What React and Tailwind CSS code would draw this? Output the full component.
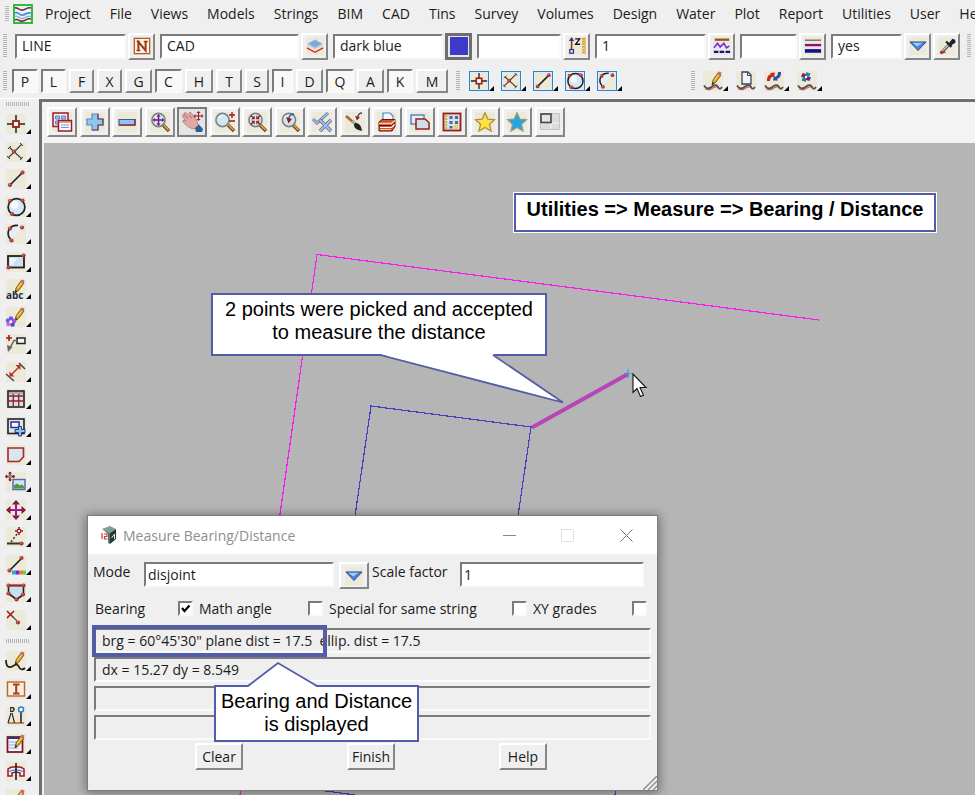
import React from "react";
import clsx from "clsx";

const MAROON = "#9b1c22";
const SUNKEN =
  "border-2 border-t-[#7b7b7b] border-l-[#7b7b7b] border-r-[#fafafa] border-b-[#fafafa]";
const RAISED =
  "border-2 border-t-white border-l-white border-r-[#868686] border-b-[#868686] bg-[#efefef]";

/* ---------- icon drawings, all on a 20 x 20 grid ---------- */

const Dot = ({ x, y }) => (
  <g>
    <circle cx={x} cy={y} r="2.1" fill="#a8363c" stroke="none" />
    <circle cx={x - 0.5} cy={y - 0.6} r="0.7" fill="#d99" stroke="none" />
  </g>
);

const Pencil = () => (
  <g>
    <path d="M9 14l1-5 5-7 3 2-5 7z" fill="#e0a21c" stroke="#6b4a10" strokeWidth=".8" />
    <path d="M14 2.500l1.500-2 3 1-1 3z" fill="#c86a78" />
    <path d="M9 14l.6-3 1.800 1.300z" fill="#222" />
    <path d="M11.500 9.500l4-5.500" stroke="#ffe08a" />
  </g>
);

const Lens = ({ cx = 8.5, cy = 8 }) => (
  <g>
    <path d="M13 13l6 6" stroke="#7b4a1a" strokeWidth="3.400" />
    <path d="M13.500 13l5 5" stroke="#e8a04a" strokeWidth="1.500" />
    <circle cx={cx} cy={cy} r="6.600" fill="#d3e6ee" stroke="#76858c" strokeWidth="1.600" />
    <path d="M4.500 6a5 5 0 0 1 4-3" stroke="#fff" strokeWidth="1.200" fill="none" />
  </g>
);

const Wave = () => (
  <path d="M1 14.500c2 3.500 5 3.500 7.500 1.500s5-3 6.500 0 3 1.500 4 0" fill="none" stroke="#4a4f55" strokeWidth="1.700" />
);
const RedWave = () => (
  <path d="M2 17.500c3 2 5 1.500 8-.5s5-1 6 .5" fill="none" stroke="#c23a3a" strokeWidth="1" />
);

const Cross4 = ({ c = "#8a1a6e" }) => (
  <g fill={c}>
    <path d="M9 4h2v12H9zM4 9h12v2H4z" />
    <path d="M10 0l4 4.500H6zM10 20l4-4.500H6zM0 10l4.500-4v8zM20 10l-4.500-4v8z" />
  </g>
);

const StarShape = ({ fill, stroke }) => (
  <path d="M10 .8l2.800 6.300 6.700.6-5 4.500 1.500 6.800-6-3.600L4 19l1.500-6.800-5-4.500 6.700-.6z" fill={fill} stroke={stroke} strokeWidth="1.200" />
);

const ICONS = {
  point: (
    <g fill="none">
      <path d="M10 1v6M10 13v6M1 10h6M13 10h6" stroke="#222" strokeWidth="1.500" />
      <rect x="7" y="7" width="6" height="6" fill="#fff" stroke={MAROON} strokeWidth="1.800" />
    </g>
  ),
  cross: (
    <g fill="none" stroke="#444" strokeWidth="1.300">
      <path d="M3 5l13 12M16 2L2 16" />
      <path d="M2 7l3-3M14 1l3 3M1 14l3 3M14 18l3-3" strokeWidth="1" />
      <Dot x={8} y={9.5} />
    </g>
  ),
  line: (
    <g>
      <path d="M4 16L16 4" stroke="#222" strokeWidth="1.700" />
      <Dot x={4} y={16} />
      <Dot x={16.5} y={3.5} />
    </g>
  ),
  circle: (
    <g>
      <circle cx="10.500" cy="10" r="8.400" fill="#d7e6f5" stroke="#222" strokeWidth="1.700" />
      <circle cx="8.500" cy="8" r="4" fill="#f3f8fd" />
      <Dot x={4} y={4} />
      <Dot x={16.5} y={3.5} />
      <Dot x={6} y={17} />
    </g>
  ),
  arc: (
    <g>
      <path d="M5 16C-1 9 3 1 12 1.500l4 2z" fill="#e6eff8" />
      <path d="M5 16C-1 9 3 1 12 1.500" fill="none" stroke="#222" strokeWidth="1.700" />
      <Dot x={4} y={4.5} />
      <Dot x={16} y={3.5} />
      <Dot x={5.5} y={16.5} />
    </g>
  ),
  rect: (
    <g>
      <rect x="2" y="4" width="16" height="11.500" fill="#cfe0ea" stroke="#222" strokeWidth="1.800" />
      <path d="M4 6h8l-6 7H4z" fill="#eef6fa" />
      <Dot x={17.5} y={3.5} />
      <Dot x={2.5} y={15.5} />
    </g>
  ),
  text: (
    <g>
      <Pencil />
      <text x="0" y="20" fontSize="10" fontWeight="700" fill="#1c3346" fontFamily="Open Sans, sans-serif">abc</text>
    </g>
  ),
  paint: (
    <g>
      <Pencil />
      <circle cx="5" cy="11.500" r="2.300" fill="#6a5be0" />
      <circle cx="8" cy="14" r="2.300" fill="#b04bd8" />
      <circle cx="6.500" cy="17.500" r="2.300" fill="#3c54c8" />
      <circle cx="2.500" cy="17" r="2.300" fill="#d46ad0" />
      <circle cx="2" cy="13.500" r="2.300" fill="#5a6ae8" />
      <circle cx="4.800" cy="14.800" r="1.500" fill="#fff" />
    </g>
  ),
  leader: (
    <g fill="none">
      <path d="M3 1v6M0 4h6" stroke={MAROON} strokeWidth="1.600" />
      <rect x="11" y="4" width="8" height="5.500" fill="#eef6fa" stroke="#222" strokeWidth="1.500" />
      <path d="M11 6.500H8L4 14" stroke="#666" strokeWidth="1.500" />
      <path d="M1 11l5.500 2L2 18z" fill="#666" />
    </g>
  ),
  dimension: (
    <g fill="none">
      <path d="M13 1l6 6M0 12l8 7" stroke="#444" strokeWidth="1.500" />
      <path d="M5 13l8-8" stroke="#c22a22" strokeWidth="1.500" />
      <path d="M14.500 3v5l-5-5zM3.500 9.500v5h5z" fill="#c22a22" />
    </g>
  ),
  table: (
    <g>
      <rect x="2" y="2" width="16" height="16" fill="#cfe0ea" stroke="#222" strokeWidth="1.600" />
      <path d="M3 4h14" stroke="#aaa" strokeWidth="2" />
      <path d="M2 7h16M2 12h16M7.300 5v12M12.700 5v12" stroke={MAROON} strokeWidth="1.300" />
    </g>
  ),
  zoomin: (
    <g>
      <rect x="2" y="2" width="16" height="14.500" fill="#dce8ee" stroke="#222" strokeWidth="1.600" />
      <rect x="5" y="5" width="8" height="5.500" fill="#f6fafc" stroke="#2a2aa8" strokeWidth="1.500" />
      <path d="M12.500 9.500h3v3h3.500v3h-3.500V19h-3v-3.500H9v-3h3.500z" fill="#8fc6e8" stroke="#1f3a8a" />
    </g>
  ),
  polygon: (
    <path d="M2 3h15.500v9l-4.500 4.500H2z" fill="#d9e6ee" stroke="#a52a2a" strokeWidth="1.600" />
  ),
  image: (
    <g>
      <path d="M4 0v9M-.5 4.500h9" stroke={MAROON} strokeWidth="1.800" />
      <path d="M4-.5l2 2H2zM4 9.500l2-2H2zM-1 4.500l2-2v4zM9 4.500l-2-2v4z" fill={MAROON} />
      <circle cx="4" cy="4.500" r="1.700" fill="#5aa" />
      <rect x="7" y="7.500" width="12" height="10" fill="#cfe2fa" stroke="#5566aa" strokeWidth="1.400" />
      <path d="M8 16.500v-3l3-2 3 2 2-1 2 2v2z" fill="#4c9a35" />
    </g>
  ),
  move: (
    <g>
      <Cross4 c="#7a1230" />
      <path d="M9.200 3h1.600v14H9.200zM3 9.200h14v1.600H3z" fill="#b01ab0" />
    </g>
  ),
  vertex: (
    <g>
      <path d="M5 15L11 7" stroke="#333" strokeWidth="1.500" strokeDasharray="2 2" />
      <path d="M1 16.500h14" stroke="#333" strokeWidth="2" />
      <path d="M13 0v8M9 4h8" stroke={MAROON} strokeWidth="1.600" />
      <rect x="11.500" y="2.500" width="3" height="3" fill="#fff" stroke={MAROON} />
      <Dot x={15.5} y={16.5} />
    </g>
  ),
  colour: (
    <g>
      <path d="M4 15L15 4" stroke="#222" strokeWidth="1.700" />
      <Dot x={3.5} y={15.5} />
      <Dot x={15.5} y={3} />
      <path d="M6 15.500h3.500v4H6z" fill="#19b0f0" />
      <path d="M9.500 15.500H13v4H9.500z" fill="#6a2ae0" />
      <path d="M13 15.500h4v4h-4z" fill="#f07a40" />
      <path d="M17 15.500h3v4h-3z" fill="#4be03a" />
    </g>
  ),
  shape: (
    <g>
      <path d="M2.500 3.500h15v9l-7 5-8-6z" fill="#c9dfec" stroke="#222" strokeWidth="1.600" />
      <path d="M2 3.500h16" stroke={MAROON} strokeWidth="1.800" />
      <Dot x={2.5} y={3.5} />
      <Dot x={17.5} y={3.5} />
      <Dot x={2.5} y={11.5} />
      <Dot x={17} y={12.5} />
      <Dot x={10.5} y={17.5} />
    </g>
  ),
  erase: (
    <g>
      <path d="M1 1l7 7M8 1L1 8" stroke={MAROON} strokeWidth="1.600" />
      <path d="M8 8l3 3" stroke="#555" strokeWidth="1.200" />
      <Dot x={12} y={12.5} />
    </g>
  ),
  sketch: (
    <g>
      <Pencil />
      <path d="M0 9c0 8 4 8 7 6s5-2 6 1 4 3 6 1" fill="none" stroke="#222" strokeWidth="1.800" />
    </g>
  ),
  ibox: (
    <g>
      <rect x="1.500" y="3" width="17" height="14" fill="#fbeee2" stroke="#c0642e" strokeWidth="1.400" />
      <path d="M7 5.500h6.500M7 14.500h6.500M10.200 5.500v9" stroke="#a0431a" strokeWidth="2" />
    </g>
  ),
  survey: (
    <g fill="none">
      <path d="M2 17h16" stroke="#c0642e" strokeWidth="1.500" />
      <path d="M5 7l-3 10M6 7l2.500 10" stroke="#222" strokeWidth="1.100" />
      <path d="M4 1h3.500l1.500 2-1.500 3H4z" fill="#333" />
      <circle cx="6" cy="3.500" r="1.200" fill="#ddd" />
      <path d="M15 6v11" stroke="#222" strokeWidth="1.500" />
      <circle cx="15" cy="3.500" r="2.500" fill="#fff" stroke="#2a80c8" strokeWidth="1.500" />
    </g>
  ),
  form: (
    <g>
      <rect x="1.500" y="3" width="15" height="15" fill="#f2f6fc" stroke="#7a1222" strokeWidth="1.700" />
      <path d="M2 4h14" stroke="#223a7a" strokeWidth="2" />
      <path d="M3 8h9M3 11h8M3 14h9" stroke="#8aa4dc" />
      <Pencil />
    </g>
  ),
  section: (
    <g fill="none">
      <path d="M2 8c3-3 13-3 16 0v7h-4v-3c-2-1-6-1-8 0v3H2z" fill="#e8eef6" stroke={MAROON} strokeWidth="1.500" />
      <path d="M3 10.500c4-2 10-2 14 0" stroke="#3a5ac0" strokeWidth="1" />
      <path d="M10 2v17" stroke="#111" strokeWidth="1.500" />
    </g>
  ),
  pencilWave: (
    <g>
      <Wave />
      <RedWave />
      <Pencil />
    </g>
  ),
  pageWave: (
    <g>
      <path d="M6 1h6l3 3v9H6z" fill="#eef4fa" stroke="#3c4650" strokeWidth="1.300" />
      <path d="M11.500 1v3.500H15" fill="none" stroke="#3c4650" />
      <Wave />
      <RedWave />
    </g>
  ),
  swapWave: (
    <g>
      <Wave />
      <RedWave />
      <path d="M3 10c0-4 1-6 4-7l-1-1 5-.5-1 5-1-1c-2 1-3 2-3 4.500z" fill="#c22a22" />
      <path d="M17 1c0 4-1 6-4 7l1 1.500-5 0 1-5 1 1.500c2-1 3-2 3-5z" fill="#2a4f9a" />
    </g>
  ),
  pinWave: (
    <g>
      <Wave />
      <RedWave />
      <path d="M9 6L4 6l1.500-4L9 3z" fill="#8a1a8a" />
      <path d="M9 6V1l4.500 1.500L12 6z" fill="#1a9a7a" />
      <path d="M9 6h5l-1.500 4L9 9z" fill="#7a1a9a" />
      <path d="M9 6v5l-4.500-1.500L6 6z" fill="#1a8a6a" />
      <circle cx="9" cy="6" r="1.200" fill="#fff" />
    </g>
  ),
  windows: (
    <g>
      <rect x="1" y="1" width="15" height="13.500" fill="#e7eef8" stroke={MAROON} strokeWidth="1.500" />
      <path d="M3.500 4h4v3h-4zM9.500 4h4v3h-4zM3.500 9h3v3h-3z" fill="#9ec4ee" stroke="#4a6cb0" strokeWidth=".8" />
      <rect x="6.500" y="8.500" width="13" height="10.500" fill="#fff" stroke={MAROON} strokeWidth="1.500" />
      <path d="M7.500 10h11" stroke="#c33" strokeWidth="1" />
      <path d="M9 13h8M9 15.500h8" stroke="#6c94d8" />
    </g>
  ),
  plus: (
    <g>
      <path d="M7 2h6v5h5v6h-5v5H7v-5H2V7h5z" fill="#8fc6ee" stroke="#5a8ac0" strokeWidth="1.200" />
      <path d="M13 2v5h5v6h-5v5H7" fill="none" stroke="#7a3a56" strokeWidth="1.200" />
    </g>
  ),
  minus: (
    <g>
      <path d="M2 7.500h16v5.500H2z" fill="#8fc6ee" stroke="#4a5a86" strokeWidth="1.200" />
      <path d="M2 13.200h16V7" fill="none" stroke={MAROON} strokeWidth="1.200" />
    </g>
  ),
  zoomall: (
    <g>
      <Lens />
      <path d="M8.500 3v10M3.500 8h10" stroke="#7a1a7a" strokeWidth="1.500" />
      <path d="M8.500 2l2 2.500h-4zM8.500 14l2-2.500h-4zM2.500 8L5 6v4zM14.500 8L12 6v4z" fill="#7a1a7a" />
    </g>
  ),
  pan: (
    <g>
      <path d="M0 3.500c1-1.500 2-.5 3 .5l3 3-4-5c0-1.500 1.500-2 2.500-.8l5 5L7 1.500C7 0 8.500 0 9.500 1.200l5 7 2 5-3 3.500c-4 .5-6-1-9-3.500L1 10c-1-1.500 1-2.500 2-1.500l1 .8z" fill="#e2a8a4" stroke="#a86a68" strokeWidth=".7" />
      <path d="M13 16l4-3.500 4 4.500-1 3h-6z" fill="#2a5f9a" />
      <path d="M16.500 0v8M12.500 4h8" stroke={MAROON} strokeWidth="1.200" />
      <path d="M16.500-1l2 2h-4zM16.500 9l2-2h-4zM11.500 4l2-2v4zM21.500 4l-2-2v4z" fill={MAROON} />
    </g>
  ),
  zoompm: (
    <g>
      <Lens cx={7.5} />
      <path d="M17 0v6M14 3h6M14 9h6" stroke={MAROON} strokeWidth="1.400" />
    </g>
  ),
  zoomfit: (
    <g>
      <Lens />
      <path d="M4 3.500l3 3M13 3.500l-3 3M4 12.500l3-3M13 12.500l-3-3" stroke={MAROON} strokeWidth="1.400" />
      <path d="M7.700 3.500v3.700H4zM9.300 3.500v3.700H13zM7.700 12.500V8.800H4zM9.300 12.500V8.800H13z" fill={MAROON} />
    </g>
  ),
  zoomback: (
    <g>
      <Lens cx={9} />
      <path d="M14 2c-4 0-5 2-5.500 6" fill="none" stroke="#2a5080" strokeWidth="1.500" />
      <path d="M6 5l6 2-3.500 4.500z" fill={MAROON} />
    </g>
  ),
  ticks: (
    <g fill="none">
      <path d="M1 7l4 4L16 1" stroke="#5c6c9a" strokeWidth="3" />
      <path d="M1 7l4 4L16 1" stroke="#9cc8ec" strokeWidth="1.600" />
      <path d="M8 8l11 11M19 8L8 19" stroke="#7a4a6a" strokeWidth="3.200" />
      <path d="M8 8l11 11M19 8L8 19" stroke="#8fc6ee" strokeWidth="2.200" />
    </g>
  ),
  brush: (
    <g>
      <path d="M1 4l7 6" stroke="#a06a40" strokeWidth="2.600" />
      <path d="M7 9l4 3.500" stroke="#aaa" strokeWidth="3.500" />
      <path d="M10 11c4 0 6 2 7 8-5-1-8-3-8-6z" fill="#222" />
      <path d="M17 1c-3 0-4 2-4.500 5" fill="none" stroke="#3a4a7a" strokeWidth="1.300" />
      <path d="M10 4l5 1-3 3.500z" fill={MAROON} />
    </g>
  ),
  printer: (
    <g>
      <path d="M6 1h7l3 3v6H6z" fill="#eef6ff" stroke="#5a86c8" strokeWidth="1.200" />
      <path d="M2 10l3-2.500h13v7L15 19H2z" fill="#d84a40" stroke="#6c1418" />
      <path d="M2 11.500h12.500l3.500-3" fill="none" stroke="#f4dc70" strokeWidth="1.500" />
      <path d="M2 13.500h12.500l3.500-3" fill="none" stroke="#5c1014" />
      <path d="M3 15.500h11.500l3-3" fill="none" stroke="#fff" strokeWidth="1.200" />
      <path d="M3 17.500h11" fill="none" stroke="#f4dc70" />
    </g>
  ),
  cascade: (
    <g>
      <path d="M1 3h13v9H1z" fill="#e4eef6" stroke="#5a86c0" strokeWidth="1.500" />
      <path d="M6 7h9l4 3.500V17H6z" fill="#cfdfe8" stroke={MAROON} strokeWidth="1.500" />
    </g>
  ),
  building: (
    <g>
      <rect x="1.500" y="1.500" width="17" height="17" fill="#d8e2ea" stroke={MAROON} strokeWidth="1.800" />
      <path d="M4 3v14" stroke="#d8b83a" strokeWidth="2.500" strokeDasharray="2 1" />
      <path d="M7.500 4h3v3h-3zM13 4h3v3h-3zM7.500 9h3v3h-3zM13 9h3v3h-3zM7.500 14h3v2.500h-3z" fill="#4a6a9a" />
      <path d="M12 13h4v4h-4z" fill="#f0d050" />
    </g>
  ),
  starY: <StarShape fill="#ffe04a" stroke="#b08a3a" />,
  starB: <StarShape fill="#1fa8e4" stroke="#9a9a80" />,
  panes: (
    <g>
      <path d="M0 1h20v17H0z" fill="#dcdcdc" />
      <path d="M11 1v17M0 11h20" stroke="#f4f4f4" />
      <path d="M.5 1.500h19v16H.5z" fill="none" stroke="#c4c4c4" />
      <rect x="1" y="2" width="10" height="8.500" fill="#e4e4e4" stroke="#444" strokeWidth="1.600" />
    </g>
  ),
  name: (
    <g>
      <rect x="1.500" y="1.500" width="17" height="17" fill="#fdf1e6" stroke="#b05a2a" strokeWidth="1.400" />
      <path d="M6 15V5.500L14 15V5" fill="none" stroke="#963c10" strokeWidth="2.200" />
      <path d="M4 5h3.500M12 5h4.500M4 15h4" stroke="#963c10" strokeWidth="1.400" />
    </g>
  ),
  layers: (
    <g>
      <path d="M1 12l9 5 9-5" fill="none" stroke="#d22" strokeWidth="1.500" />
      <path d="M1 9l9 5 9-5-9-5z" fill="#c8d0da" />
      <path d="M2 7.500l8 4.500 8-4.500L10 3z" fill="#7fa8d8" stroke="#a8c4e4" />
    </g>
  ),
  swatch: <path d="M0 0h20v20H0z" fill="#3d39c9" />,
  zscale: (
    <g>
      <path d="M4 3v12" stroke={MAROON} strokeWidth="1.600" />
      <path d="M4 0l3 4.500H1z" fill="#27408a" />
      <rect x="2" y="14" width="4" height="4" fill="#fff" stroke="#27409a" strokeWidth="1.500" />
      <path d="M8 2h5L8.500 8H13.500" fill="none" stroke="#111" strokeWidth="1.500" />
      <path d="M17.500 1v18" stroke="#d89a1c" strokeWidth="3.500" strokeDasharray="2 1" />
      <path d="M19 0v20" stroke="#e6b84a" />
    </g>
  ),
  terrain: (
    <g fill="none">
      <path d="M2 3h16" stroke="#9a5210" strokeWidth="2.500" />
      <path d="M1 12l4-5 3 4 4-4 3 5 3-2" stroke="#7a2ae8" strokeWidth="1.800" />
      <path d="M1 16.500h18" stroke="#101090" strokeWidth="2.500" strokeDasharray="5 1.500" />
    </g>
  ),
  weight: (
    <g>
      <path d="M1 3.500h18" stroke="#333" />
      <path d="M1 9h18" stroke="#8a108a" strokeWidth="2.600" />
      <path d="M1 15.500h18" stroke="#101090" strokeWidth="4" />
    </g>
  ),
  down: (
    <g>
      <path d="M1 5.500h18L10 15z" fill="#3f86e8" stroke="#2c3f78" strokeWidth="1" />
      <path d="M4 6.500h11l-6 4z" fill="#a8ccfa" />
    </g>
  ),
  dropper: (
    <g>
      <path d="M3 18l9-9" stroke="#444" strokeWidth="3.200" />
      <path d="M4.500 16l7-7" stroke="#dbe6f0" strokeWidth="1.300" />
      <path d="M2 18l4-3 3 2-5 2z" fill="#c22a22" />
      <path d="M9 5l6 6" stroke="#222" strokeWidth="2.500" />
      <path d="M12 7l4-5 3 1 .5 3-5 3.500z" fill="#1c2040" />
    </g>
  ),
};

const Icon = ({ name, className }) => (
  <svg viewBox="0 0 20 20" aria-hidden="true" className={clsx("shrink-0 overflow-visible", className)}>
    {ICONS[name]}
  </svg>
);

/* ---------- small parts ---------- */

const GripV = ({ className }) => (
  <span className={clsx("w-[4px] shrink-0 bg-[repeating-linear-gradient(to_bottom,#b4b4b4_0_1px,#f0f0f0_1px_2px)]", className)} />
);
const GripH = () => (
  <span className="h-[4px] w-6 shrink-0 bg-[repeating-linear-gradient(to_right,#b4b4b4_0_1px,#f0f0f0_1px_2px)]" />
);

/* Flat tool with an optional fly-out corner */
function Tool({ name, boxed, flyout = true }) {
  return (
    <button type="button" aria-label={name} className="flex shrink-0 items-end">
      <span className={clsx("bg-[#ece9d8]", boxed && "border border-[#1f86e8]")}>
        <Icon name={name} className={boxed ? "size-[18px]" : "size-5"} />
      </span>
      {flyout && (
        <svg viewBox="0 0 5 5" className="size-[5px]" aria-hidden="true">
          <path d="M5 0v5H0z" fill="#000" />
        </svg>
      )}
    </button>
  );
}

function Field({ label, value, pick, width }) {
  return (
    <div className="flex shrink-0 items-center gap-0.5">
      <input
        aria-label={label}
        defaultValue={value}
        className={clsx("h-[25px] bg-white pb-px pl-[5px] outline-none", SUNKEN, width)}
      />
      <BarButton name={pick} />
    </div>
  );
}

const BarButton = ({ name }) => (
  <button
    type="button"
    aria-label={name}
    className={clsx(
      "flex h-[27px] w-[27px] shrink-0 items-center justify-center",
      name === "swatch" ? "border-[3px] border-[#6e6e6e] bg-[#e8e8e8]" : RAISED
    )}
  >
    <span className="flex bg-[#ece9d8]">
      <Icon name={name} className="size-[18px]" />
    </span>
  </button>
);

/* ---------- data ---------- */

const MENUS = [
  "Project", "File", "Views", "Models", "Strings", "BIM", "CAD", "Tins", "Survey",
  "Volumes", "Design", "Water", "Plot", "Report", "Utilities", "User", "Help",
];

const SNAPS = [
  ["P", true, "w-[26px]"], ["L", true, "w-[25px]"], ["F", false, "w-[25px]"],
  ["X", false, "w-[25px]"], ["G", false, "w-[27px]"], ["C", true, "w-[27px]"],
  ["H", false, "w-[28px]"], ["T", false, "w-[26px]"], ["S", false, "w-[24px]"],
  ["I", true, "w-[21px]"], ["D", false, "w-[27px]"], ["Q", true, "w-[28px]"],
  ["A", false, "w-[27px]"], ["K", true, "w-[26px]"], ["M", false, "w-[32px]"],
];

const SIDE_A = [
  "point", "cross", "line", "circle", "arc", "rect", "text", "paint", "leader", "dimension",
  "table", "zoomin", "polygon", "image", "move", "vertex", "colour", "shape", "erase",
];
const SIDE_B = ["sketch", "ibox", "survey", "form", "section", "sketch"];

const VIEW_TOOLS = [
  "windows", "plus", "minus", "zoomall", "pan", "zoompm", "zoomfit", "zoomback",
  "ticks", "brush", "printer", "cascade", "building", "starY", "starB", "panes",
];

/* ---------- regions ---------- */

function MenuBar() {
  return (
    <nav className="flex h-7 items-center pl-[5px]">
      <GripV className="h-4" />
      <svg viewBox="0 0 20 20" className="ml-1 size-5 shrink-0" aria-hidden="true">
        <rect x="1" y="1" width="18" height="18" fill="#e8f4fa" stroke="#1fb52c" strokeWidth="1.800" />
        <path d="M2 4c3-1 4 3 8 2s4-3 8-2" fill="none" stroke="#7a3030" strokeWidth="1.600" />
        <path d="M2 9c3-2 4 3 8 2s4-3 8-2" fill="none" stroke="#4a8ad8" strokeWidth="1.800" />
        <path d="M2 12.500c3-2 4 3 8 2s4-3 8-2" fill="none" stroke="#8ab4e4" strokeWidth="1.400" />
        <path d="M2 16c3-2 4 2 8 1s4-3 8-2" fill="none" stroke="#7a3030" strokeWidth="1.600" />
      </svg>
      <div className="ml-[3px] flex gap-px pb-0.5">
        {MENUS.map((m) => (
          <button key={m} type="button" className="shrink-0 px-[9px]">
            {m}
          </button>
        ))}
      </div>
    </nav>
  );
}

function PropertyBar() {
  return (
    <div className="flex h-9 items-center gap-[5px] pl-[3px]">
      <GripV className="mr-[3px] h-6" />
      <Field label="Name" value="LINE" pick="name" width="w-[111px]" />
      <Field label="Model" value="CAD" pick="layers" width="w-[139px]" />
      <Field label="Colour" value="dark blue" pick="swatch" width="w-[110px]" />
      <Field label="Height" value="" pick="zscale" width="w-[84px]" />
      <Field label="Line style" value="1" pick="terrain" width="w-[111px]" />
      <Field label="Weight" value="" pick="weight" width="w-[57px]" />
      <Field label="Tinable" value="yes" pick="down" width="w-[71px]" />
      <span className="-ml-[3px] flex">
        <BarButton name="dropper" />
      </span>
      <GripV className="ml-0.5 h-6" />
    </div>
  );
}

function SnapBar() {
  return (
    <div className="flex h-[34px] items-center pl-[3px]">
      <GripV className="h-5" />
      <div className="ml-[5px] flex gap-[3px]">
        {SNAPS.map(([k, on, w]) => (
          <button
            key={k}
            type="button"
            aria-pressed={on}
            className={clsx("flex h-6 shrink-0 items-center justify-center", w, on ? SUNKEN : RAISED, on && "bg-[#f8f8f8]")}
          >
            {k}
          </button>
        ))}
      </div>
      <GripV className="ml-2 h-5" />
      <div className="ml-[9px] flex gap-[7px]">
        {["point", "cross", "line", "circle", "arc"].map((n) => (
          <Tool key={n} name={n} boxed />
        ))}
      </div>
      <GripV className="ml-[69px] h-5" />
      <div className="ml-2 flex gap-2">
        <Tool name="pencilWave" />
        <Tool name="pageWave" flyout={false} />
        <Tool name="swapWave" />
        <Tool name="pinWave" />
      </div>
    </div>
  );
}

function SideBar() {
  return (
    <aside className="flex w-[39px] shrink-0 flex-col overflow-hidden pl-1.5 pt-[3px]">
      <GripH />
      <div className="mt-2 flex h-[516px] shrink-0 flex-col justify-between">
        {SIDE_A.map((n) => (
          <Tool key={n} name={n} />
        ))}
      </div>
      <div className="mb-2 mt-[9px] flex">
        <GripH />
      </div>
      <div className="flex h-[158px] shrink-0 flex-col justify-between">
        {SIDE_B.map((n, i) => (
          <Tool key={i} name={n} />
        ))}
      </div>
    </aside>
  );
}

function ViewBar() {
  return (
    <div className="h-[41px] shrink-0 bg-[#f3f3f3] pl-[5px] pt-[5px]">
      <div className="flex w-[518px] justify-between">
        {VIEW_TOOLS.map((n) => (
          <button
            key={n}
            type="button"
            aria-label={n}
            className={clsx(
              "flex size-[30px] items-center justify-center",
              n === "pan" ? "border-2 border-[#7b7b7b] bg-[#e4e4e4]" : RAISED
            )}
          >
            <span className={clsx("flex", n !== "panes" && n !== "pan" && "bg-[#ece9d8]")}>
              <Icon name={n} className="size-5" />
            </span>
          </button>
        ))}
      </div>
    </div>
  );
}

/* Plan-view line work */
function Drawing() {
  return (
    <svg viewBox="44 143 931 652" className="absolute left-0 top-0 h-[652px] w-[931px]" aria-hidden="true">
      <g fill="none" shapeRendering="crispEdges">
        <path d="M819 320L317 254.500L240 795" stroke="#f41cf0" strokeWidth="1.200" />
        <path d="M319 790l36 5M616 790l-1 5M355 516l16-110 160 21-13 89" stroke="#4340c4" strokeWidth="1.200" />
      </g>
      <path d="M532 427.500l96-53.500" stroke="#b844b8" strokeWidth="4" />
      <path d="M628 369v9M624 373.500h9" stroke="#3aa0d0" strokeWidth="1.200" />
    </svg>
  );
}

/* Mouse pointer resting on the second picked point */
function Pointer() {
  return (
    <svg viewBox="0 0 16 26" className="absolute left-[588px] top-[230px] h-[26px] w-4" aria-hidden="true">
      <path d="M1 1v18.500l4-4 3.500 8 3-1.300L8 14.500h6z" fill="#fff" stroke="#111" strokeWidth="1.100" />
    </svg>
  );
}

function PickCallout() {
  return (
    <div className="absolute left-[167px] top-[150px] w-[336px]">
      <div className="h-[63px] border-2 border-[#535ca6] bg-white pt-[3px] text-center font-['Liberation_Sans',Arial,sans-serif] text-[20px] leading-[23px] text-black">
        2 points were picked and accepted
        <br />
        to measure the distance
      </div>
      <svg viewBox="0 0 190 50" className="absolute left-[167px] top-[61px] h-[50px] w-[190px]" aria-hidden="true">
        <path d="M2 0L185 48.500L115 0" fill="#fff" />
        <path d="M2 1L185 48.500L115 1" fill="none" stroke="#535ca6" strokeWidth="1.800" />
      </svg>
    </div>
  );
}

function ResultCallout() {
  return (
    <div className="absolute left-[170px] top-[542px] w-[205px]">
      <div className="h-[57px] border-2 border-[#535ca6] bg-white pt-[3px] text-center font-['Liberation_Sans',Arial,sans-serif] text-[20px] leading-[23px] text-black">
        Bearing and Distance
        <br />
        is displayed
      </div>
      <svg viewBox="0 0 72 26" className="absolute -top-6 left-[33px] h-[26px] w-[72px]" aria-hidden="true">
        <path d="M1 26L31 2L70 26z" fill="#fff" />
        <path d="M1 25L31 2L70 25" fill="none" stroke="#535ca6" strokeWidth="1.800" />
      </svg>
    </div>
  );
}

function Check({ label, on, className }) {
  return (
    <label className={clsx("flex items-center gap-1.5", className)}>
      <span className="relative flex">
        <input
          type="checkbox"
          aria-label={label || "Option"}
          defaultChecked={on}
          className={clsx("peer size-[15px] appearance-none bg-white", SUNKEN)}
        />
        <svg viewBox="0 0 15 15" className="pointer-events-none absolute inset-0 hidden size-[15px] peer-checked:block" aria-hidden="true">
          <path d="M4 7l2.500 3L11.500 4.500" fill="none" stroke="#000" strokeWidth="2.200" />
        </svg>
      </span>
      {label}
    </label>
  );
}

const Result = ({ children }) => (
  <output className={clsx("flex h-[25px] items-center bg-[#efefef] pb-px pl-1.5", SUNKEN)}>{children}</output>
);

const DialogButton = ({ children }) => (
  <button type="button" className={clsx("h-[27px] w-12 text-center leading-[22px]", RAISED)}>
    {children}
  </button>
);

function MeasureDialog() {
  return (
    <section
      aria-label="Measure Bearing/Distance"
      className="absolute left-[44px] top-[373px] h-[274px] w-[569px] bg-[#efefef] shadow-[0_1px_10px_2px_rgba(0,0,0,0.4)] outline-1 outline-[#7d7d7d]"
    >
      <header className="flex h-[38px] items-center bg-white pl-3 pr-6">
        <svg viewBox="0 0 18 20" className="h-5 w-[18px]" aria-hidden="true">
          <path d="M2 4l8-3 6 3-6 4z" fill="#7aa08e" />
          <path d="M10 8l6-4v10l-6 5z" fill="#26382f" />
          <path d="M2 4l8 4v11l-2-1V9z" fill="#5c7568" />
          <path d="M2 8v6M4 9h3v2.500H4.500V14H7.500" fill="none" stroke="#d0393e" strokeWidth="1.200" />
          <path d="M11.500 13l3-4v5" fill="none" stroke="#dfe8e2" strokeWidth="1" />
        </svg>
        <h1 className="ml-[5px] flex-1 text-[14px] text-[#8e8e8e]">Measure Bearing/Distance</h1>
        <button type="button" aria-label="Minimise">
          <svg viewBox="0 0 13 13" className="size-[13px]"><path d="M0 6.500h13" stroke="#888" /></svg>
        </button>
        <button type="button" aria-label="Maximise" className="ml-[45px]">
          <svg viewBox="0 0 13 13" className="size-[13px]"><path d="M.5.5h12v12H.5z" fill="none" stroke="#e2e2e2" /></svg>
        </button>
        <button type="button" aria-label="Close" className="ml-[46px]">
          <svg viewBox="0 0 13 13" className="size-[13px]"><path d="M.5.5l12 12M12.500.5l-12 12" stroke="#777" /></svg>
        </button>
      </header>

      <div className="flex items-start pl-[5px] pt-2">
        <label htmlFor="mode" className="w-[51px] leading-5">Mode</label>
        <input id="mode" defaultValue="disjoint" className={clsx("h-[25px] w-[190px] bg-white pl-0.5 outline-none", SUNKEN)} />
        <button type="button" aria-label="Choose mode" className={clsx("ml-[5px] flex h-[27px] w-[30px] items-center justify-center", RAISED)}>
          <span className="flex bg-[#ece9d8]"><Icon name="down" className="size-[18px]" /></span>
        </button>
        <label htmlFor="scale" className="ml-[3px] w-[88px] whitespace-nowrap leading-5">Scale factor</label>
        <input id="scale" defaultValue="1" className={clsx("h-[25px] w-[184px] bg-white pl-0.5 outline-none", SUNKEN)} />
      </div>

      <div className="flex h-[39px] items-center whitespace-nowrap pl-[7px]">
        <span className="w-[83px]">Bearing</span>
        <Check label="Math angle" on className="w-[130px]" />
        <Check label="Special for same string" className="w-[204px]" />
        <Check label="XY grades" className="w-[120px]" />
        <Check />
      </div>

      <div className="mx-[6px] flex flex-col gap-1">
        <Result>brg = 60°45'30" plane dist = 17.5&nbsp; ellip. dist = 17.5</Result>
        <Result>dx = 15.27 dy = 8.549</Result>
        <Result />
        <Result />
      </div>

      <div className="ml-[107px] mt-[3px] flex gap-[104px]">
        <DialogButton>Clear</DialogButton>
        <DialogButton>Finish</DialogButton>
        <DialogButton>Help</DialogButton>
      </div>

      <span className="absolute left-1 top-[109px] h-8 w-[235px] border-4 border-[#535ca6]" />
      <svg viewBox="0 0 14 14" className="absolute bottom-0 right-0 size-3.5" aria-hidden="true">
        <path d="M0 14L14 0M5 14l9-9M10 14l4-4" stroke="#8c8c8c" strokeWidth="1.400" />
      </svg>
    </section>
  );
}

export default function App() {
  return (
    <div className="flex h-screen flex-col overflow-hidden bg-[#efefef] font-['Open_Sans','Noto_Sans',sans-serif] text-[14px] text-[#1b1b1b]">
      <MenuBar />
      <PropertyBar />
      <SnapBar />
      <div className="flex min-h-0 flex-1 border-t border-white">
        <SideBar />
        <div className="flex min-w-0 flex-1 flex-col border-l-[3px] border-t-[3px] border-[#6f6f6f]">
          <ViewBar />
          <main className="relative ml-0.5 min-h-0 flex-1 overflow-hidden bg-[#b5b5b5]">
            <Drawing />
            <h2 className="absolute left-[469px] top-[49px] h-[41px] w-[424px] border border-white bg-white">
              <span className="block h-full whitespace-nowrap border-2 border-[#535ca6] pt-[3px] text-center font-['Liberation_Sans',Arial,sans-serif] text-[20px] font-bold leading-[23px] text-black">
                Utilities =&gt; Measure =&gt; Bearing / Distance
              </span>
            </h2>
            <PickCallout />
            <Pointer />
            <MeasureDialog />
            <ResultCallout />
          </main>
        </div>
      </div>
    </div>
  );
}
